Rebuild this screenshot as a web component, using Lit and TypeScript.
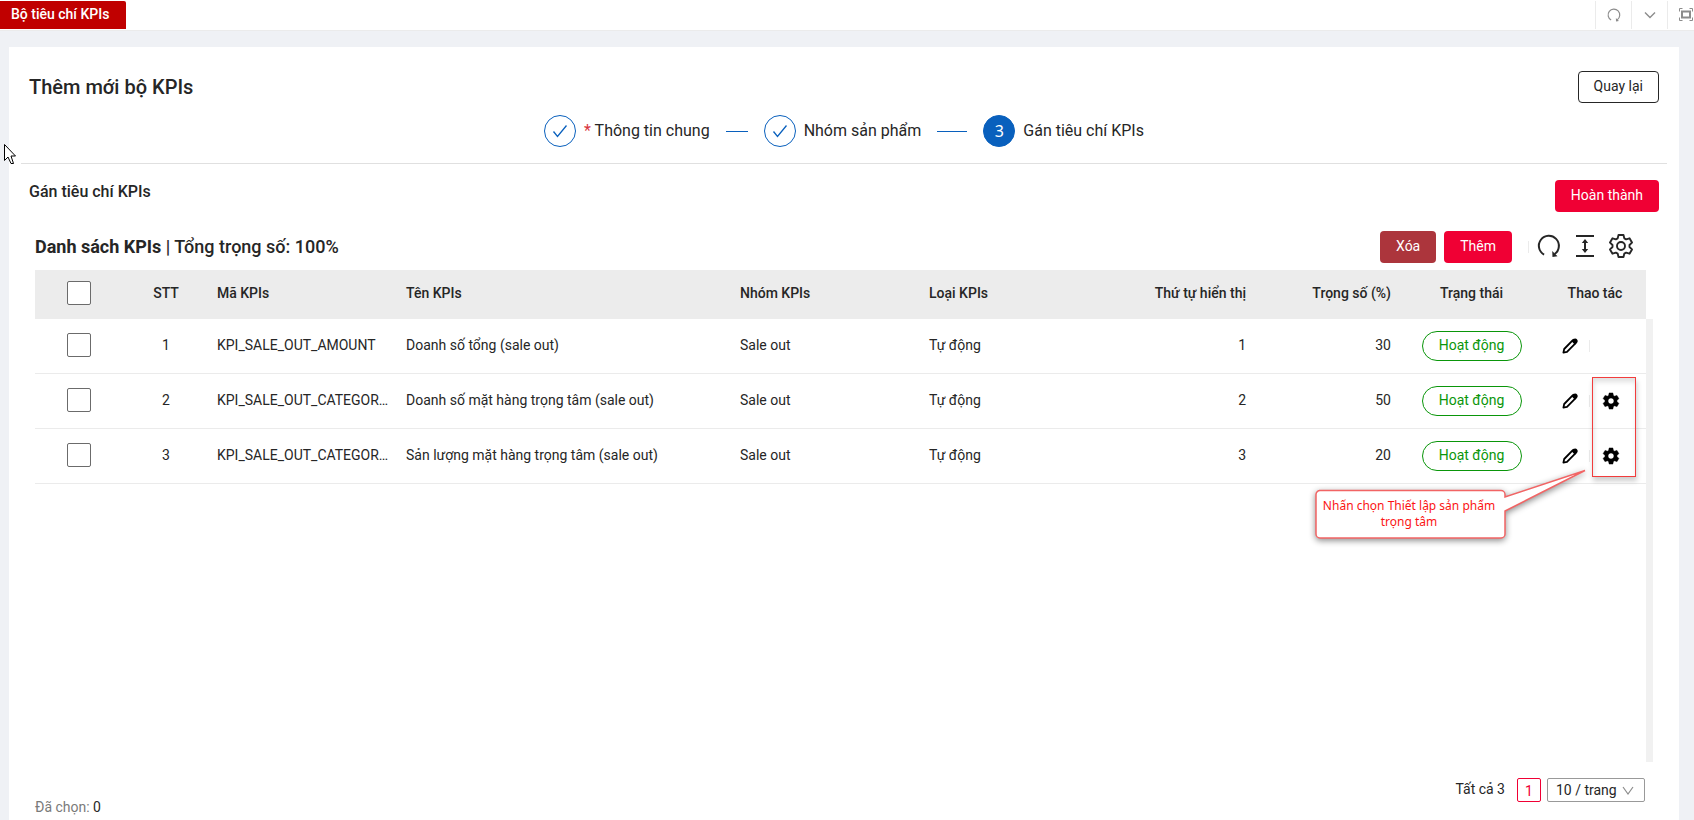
import { LitElement, html, css, svg } from "lit";
import { customElement } from "lit/decorators.js";
import { classMap } from "lit/directives/class-map.js";

interface Kpi {
  code: string;
  name: string;
  group: string;
  kind: string;
  order: number;
  weight: number;
  configurable: boolean;
}

const KPIS: Kpi[] = [
  { code: "KPI_SALE_OUT_AMOUNT", name: "Doanh số tổng (sale out)", group: "Sale out", kind: "Tự động", order: 1, weight: 30, configurable: false },
  { code: "KPI_SALE_OUT_CATEGOR…", name: "Doanh số mặt hàng trọng tâm (sale out)", group: "Sale out", kind: "Tự động", order: 2, weight: 50, configurable: true },
  { code: "KPI_SALE_OUT_CATEGOR…", name: "Sản lượng mặt hàng trọng tâm (sale out)", group: "Sale out", kind: "Tự động", order: 3, weight: 20, configurable: true },
];

const icon = (size: number, body: unknown, box = 24) => html`
  <svg class="icon" width=${size} height=${size} viewBox="0 0 ${box} ${box}" aria-hidden="true">${body}</svg>
`;

const reload = svg`
  <path d="M7.1 20.6A10 10 0 1 1 17.6 20" fill="none" stroke="currentColor" stroke-width="2"/>
  <path d="M15.2 17l.3 6 5-.7z" fill="currentColor"/>`;
const check = svg`<path d="M2.500 9.500l4 5L15.500 3.500" fill="none" stroke="currentColor" stroke-width="1.300"/>`;
const chevron = svg`<path d="M3 5.500l5 5 5-5" fill="none" stroke="currentColor" stroke-width="1.400"/>`;
const fullscreen = svg`
  <path d="M.5 3.500v-3h3M10.500.5h3v3M13.500 9.500v3h-3M3.500 12.500h-3v-3" fill="none" stroke="currentColor"/>
  <path d="M3 3.500h8v6H3z" fill="none" stroke="currentColor" stroke-width="2"/>`;
const density = svg`
  <path d="M3 2h18M3 22h18M12 6.500v11" fill="none" stroke="currentColor" stroke-width="2"/>
  <path d="M8.800 9L12 5l3.200 4zM8.800 15L12 19l3.200-4z" fill="currentColor"/>`;
const gearOutline = svg`
  <path d="M9.500 1h5l.8 3.400 1.800 1 3.400-1.100 2.500 4.300-2.500 2.400v2l2.500 2.400-2.500 4.300-3.400-1.100-1.800 1-.8 3.400h-5l-.8-3.400-1.800-1-3.400 1.100L1 15.400 3.500 13v-2L1 8.600l2.500-4.300 3.400 1.100 1.800-1z" fill="none" stroke="currentColor" stroke-width="1.900" stroke-linejoin="round"/>
  <circle cx="12" cy="12" r="4" fill="none" stroke="currentColor" stroke-width="1.900"/>`;
const pencil = svg`
  <path d="M1.400 14.600l.8-3.600L10.600 2.400a1.900 1.900 0 0 1 2.800 2.900L5 13.800z" fill="none" stroke="currentColor" stroke-width="1.800" stroke-linejoin="round"/>
  <path d="M9.600 3.200L11.800.9q2-1 3.300.5t.2 3.100L12.900 6.700z" fill="currentColor"/>`;
const gearSolid = svg`
  <path fill="currentColor" stroke="currentColor" stroke-width=".6" d="M19.140 12.940c.04-.3.06-.61.06-.94 0-.32-.02-.64-.07-.94l2.030-1.580c.18-.14.23-.41.12-.61l-1.920-3.320c-.12-.22-.37-.29-.59-.22l-2.390.96c-.5-.38-1.030-.7-1.620-.94l-.36-2.540c-.04-.24-.24-.41-.48-.41h-3.840c-.24 0-.43.17-.47.41l-.36 2.540c-.59.24-1.130.57-1.620.94l-2.390-.96c-.22-.08-.47 0-.59.22L2.740 8.870c-.12.21-.08.47.12.61l2.030 1.580c-.05.3-.09.63-.09.94s.02.64.07.94l-2.030 1.580c-.18.14-.23.41-.12.61l1.920 3.320c.12.22.37.29.59.22l2.390-.96c.5.38 1.030.7 1.620.94l.36 2.540c.05.24.24.41.48.41h3.840c.24 0 .44-.17.47-.41l.36-2.540c.59-.24 1.130-.56 1.620-.94l2.390.96c.22.08.47 0 .59-.22l1.920-3.320c.12-.22.07-.47-.12-.61l-2.010-1.580zM12 15.600c-1.980 0-3.600-1.620-3.600-3.600s1.620-3.600 3.600-3.600 3.600 1.620 3.600 3.600-1.620 3.600-3.600 3.600z"/>`;

@customElement("app-root")
export class AppRoot extends LitElement {
  static styles = css`
    :host {
      display: flex;
      flex-direction: column;
      min-height: 100vh;
      box-sizing: border-box;
      background: #eff1f5;
      color: #262626;
      font: 14px/22px Roboto, "Liberation Sans", sans-serif;
    }
    * { box-sizing: border-box; }
    button, input, select { font: inherit; color: inherit; margin: 0; }
    button { cursor: pointer; }
    h1, h2, h3 { margin: 0; font-weight: 500; }
    .icon { display: block; flex: none; overflow: visible; }

    .topbar {
      display: flex;
      height: 31px;
      background: #fff;
      border-bottom: 1px solid #ebebeb;
      overflow: hidden;
      flex: none;
    }
    .tab {
      display: flex;
      align-items: center;
      height: 28px;
      margin-top: 1px;
      padding: 0 17px 2px 11px;
      background: #c00000;
      border-radius: 0 2px 0 0;
      color: #fff;
      font-weight: 500;
      text-decoration: none;
    }
    .tools { display: flex; margin-left: auto; padding: 1px 0; }
    .tool {
      display: flex;
      align-items: center;
      justify-content: center;
      width: 36px;
      padding: 0;
      border: 0;
      border-left: 1px solid #ebebeb;
      background: none;
      color: #8c8c8c;
    }
    .tool.last { width: 27px; justify-content: flex-end; padding-right: 1px; }

    .card {
      position: relative;
      display: flex;
      flex-direction: column;
      flex: 1;
      margin: 16px 15px 0 9px;
      padding: 24px 12px 0;
      background: #fff;
    }
    .head { display: flex; justify-content: space-between; padding: 0 8px; }
    .title { font-size: 20px; line-height: 32px; }
    .btn {
      height: 32px;
      padding: 0 16px 2px;
      border: 0;
      border-radius: 4px;
      background: #f00034;
      color: #fff;
    }
    .btn.outline { border: 1px solid #262626; background: #fff; color: #262626; padding: 0 15px 2px; }
    .btn.muted { background: #ac353c; }

    .steps {
      display: flex;
      justify-content: center;
      align-items: center;
      gap: 16px;
      margin: 12px 0 0;
      padding: 0 0 16px;
      border-bottom: 1px solid #e0e0e0;
      list-style: none;
      font-size: 16px;
      line-height: 32px;
    }
    .step { display: flex; gap: 8px; }
    .dot {
      display: flex;
      align-items: center;
      justify-content: center;
      width: 32px;
      height: 32px;
      border: 1px solid #0960bd;
      border-radius: 50%;
      color: #0960bd;
    }
    .dot.current { background: #0960bd; color: #fff; font-family: "Noto Sans", sans-serif; }
    .required { color: #d9363e; }
    .line { width: 22px; height: 1px; background: #0960bd; }
    .line.long { width: 30px; }

    .section { display: flex; justify-content: space-between; padding: 16px 8px 0; }
    .subtitle { font-size: 16px; line-height: 24px; }

    .list { display: flex; flex-direction: column; flex: 1; padding: 19px 14px 0; }
    .bar { display: flex; align-items: center; gap: 8px; padding: 0 20px 7px 0; }
    .listtitle { margin-right: auto; font-size: 18px; line-height: 32px; }
    .listtitle b { font-weight: 700; }
    .sep { width: 1px; height: 12px; background: #ebebeb; }
    .bar > .sep { margin-left: 8px; }
    .icons { display: flex; align-items: center; gap: 12px; padding-bottom: 2px; }
    .iconbtn { display: flex; padding: 0; border: 0; background: none; color: #262626; }

    .tablewrap { display: flex; flex: none; }
    .scroll { width: 7px; height: 443px; margin-top: 49px; background: #f1f1f1; flex: none; }
    table { flex: 1; width: 100%; table-layout: fixed; border-collapse: separate; border-spacing: 0; align-self: flex-start; }
    th { height: 49px; padding: 0 8px 4px; background: #ececec; font-weight: 500; text-align: left; }
    td { height: 55px; padding: 0 8px 2px; border-bottom: 1px solid #ebebeb; white-space: nowrap; }
    .w-check { width: 88px; }
    .w-index { width: 86px; }
    .w-code { width: 189px; }
    .w-name { width: 334px; }
    .w-mid { width: 189px; }
    .w-num { width: 145px; }
    .w-act { width: 102px; }
    th.center, td.center { text-align: center; }
    th.right, td.right { text-align: right; }
    .check {
      display: block;
      appearance: none;
      width: 24px;
      height: 24px;
      margin: 0 auto;
      border: 1px solid #6b6b6b;
      border-radius: 2px;
      background: #fff;
    }
    .pill {
      display: inline-block;
      width: 100px;
      height: 30px;
      border: 1px solid #0a960a;
      border-radius: 15px;
      color: #0a960a;
      line-height: 26px;
      vertical-align: middle;
    }
    td.flush { padding: 0; }
    .actions { display: flex; align-items: center; gap: 11px; padding-left: 18px; }
    .actions .iconbtn { color: #000; }

    .foot { display: flex; justify-content: space-between; padding: 16px 8px 0 0; }
    .picked { padding-top: 18px; color: #7a7a7a; }
    .picked b { font-weight: 400; color: #262626; }
    .pager { display: flex; align-items: flex-start; gap: 6px; }
    .total { margin-right: 6px; }
    .page { width: 24px; height: 24px; padding: 2px 0 0; border: 1px solid #f00034; border-radius: 2px; background: #fff; color: #f00034; line-height: 20px; }
    .size { position: relative; display: flex; color: #8c8c8c; }
    .size select {
      appearance: none;
      width: 98px;
      height: 24px;
      padding: 0 0 2px 8px;
      border: 1px solid #999;
      border-radius: 2px;
      background: #fff;
      color: #262626;
    }
    .size .icon { position: absolute; right: 10px; top: 6px; pointer-events: none; }

    .frame {
      position: absolute;
      right: 43px;
      top: 330px;
      width: 44px;
      height: 100px;
      border: 1px solid #f23c3c;
      box-shadow: 1px 4px 5px rgba(0, 0, 0, 0.2), inset 1px 4px 5px rgba(0, 0, 0, 0.12);
      pointer-events: none;
    }
    .callout { position: absolute; right: 92px; top: 422px; width: 273px; height: 72px; }
    .callout svg { display: block; overflow: visible; filter: drop-shadow(0 2px 3px rgba(0, 0, 0, 0.45)); }
    .note {
      position: absolute;
      left: 0;
      top: 29px;
      width: 190px;
      margin: 0;
      color: #fb1414;
      font: 12px/16px "Noto Sans", sans-serif;
      text-align: center;
    }
    .pointer { position: absolute; left: -6px; top: 96px; pointer-events: none; }
  `;

  private row(kpi: Kpi, index: number) {
    return html`
      <tr>
        <td class="center"><input class="check" type="checkbox" aria-label="Chọn ${kpi.name}" /></td>
        <td class="center">${index + 1}</td>
        <td>${kpi.code}</td>
        <td>${kpi.name}</td>
        <td>${kpi.group}</td>
        <td>${kpi.kind}</td>
        <td class="right">${kpi.order}</td>
        <td class="right">${kpi.weight}</td>
        <td class="center flush"><span class="pill">Hoạt động</span></td>
        <td class="flush">
          <div class="actions">
            <button class="iconbtn" aria-label="Sửa">${icon(16, pencil, 16)}</button>
            <span class="sep"></span>
            ${kpi.configurable ? html`<button class="iconbtn" aria-label="Thiết lập sản phẩm trọng tâm">${icon(20, gearSolid)}</button>` : ""}
          </div>
        </td>
      </tr>
    `;
  }

  render() {
    return html`
      <nav class="topbar">
        <a class="tab" href="#kpis">Bộ tiêu chí KPIs</a>
        <div class="tools">
          <button class="tool" aria-label="Tải lại">${icon(14, reload)}</button>
          <button class="tool" aria-label="Mở rộng">${icon(16, chevron, 16)}</button>
          <button class="tool last" aria-label="Toàn màn hình">${icon(14, fullscreen, 14)}</button>
        </div>
      </nav>
      <main class="card">
        <header class="head">
          <h1 class="title">Thêm mới bộ KPIs</h1>
          <button class="btn outline">Quay lại</button>
        </header>
        <ol class="steps">
          <li class="step"><span class="dot">${icon(18, check, 18)}</span><span><span class="required">*</span> Thông tin chung</span></li>
          <li class="line" role="presentation"></li>
          <li class="step"><span class="dot">${icon(18, check, 18)}</span><span>Nhóm sản phẩm</span></li>
          <li class=${classMap({ line: true, long: true })} role="presentation"></li>
          <li class="step"><span class="dot current">3</span><span>Gán tiêu chí KPIs</span></li>
        </ol>
        <div class="section">
          <h2 class="subtitle">Gán tiêu chí KPIs</h2>
          <button class="btn">Hoàn thành</button>
        </div>
        <section class="list">
          <div class="bar">
            <h3 class="listtitle"><b>Danh sách KPIs</b> | Tổng trọng số: 100%</h3>
            <button class="btn muted">Xóa</button>
            <button class="btn">Thêm</button>
            <span class="sep"></span>
            <div class="icons">
              <button class="iconbtn" aria-label="Làm mới">${icon(24, reload)}</button>
              <button class="iconbtn" aria-label="Mật độ">${icon(24, density)}</button>
              <button class="iconbtn" aria-label="Cài đặt cột">${icon(24, gearOutline)}</button>
            </div>
          </div>
          <div class="tablewrap">
            <table>
              <thead>
                <tr>
                  <th class="center w-check"><input class="check" type="checkbox" aria-label="Chọn tất cả" /></th>
                  <th class="center w-index">STT</th>
                  <th class="w-code">Mã KPIs</th>
                  <th class="w-name">Tên KPIs</th>
                  <th class="w-mid">Nhóm KPIs</th>
                  <th>Loại KPIs</th>
                  <th class="right w-num">Thứ tự hiển thị</th>
                  <th class="right w-num">Trọng số (%)</th>
                  <th class="center w-num">Trạng thái</th>
                  <th class="center w-act">Thao tác</th>
                </tr>
              </thead>
              <tbody>${KPIS.map((k, i) => this.row(k, i))}</tbody>
            </table>
            <div class="scroll"></div>
          </div>
          <footer class="foot">
            <div class="picked">Đã chọn: <b>0</b></div>
            <div class="pager">
              <span class="total">Tất cả 3</span>
              <button class="page">1</button>
              <label class="size">
                <select aria-label="Số dòng mỗi trang"><option>10 / trang</option></select>
                ${icon(14, svg`<path d="M2 3l5 7 5-7" fill="none" stroke="currentColor" stroke-width="1.200"/>`, 14)}
              </label>
            </div>
          </footer>
        </section>

        <div class="frame"></div>
        <div class="callout">
          <svg width="273" height="72" viewBox="0 0 273 72" aria-hidden="true">
            <path d="M5 21.500H187a4 4 0 0 1 4 4V28L271 1.500 191 42V65a4 4 0 0 1-4 4H6a4 4 0 0 1-4-4V25.500a4 4 0 0 1 4-4z" fill="#fff" stroke="#f26464" stroke-width="1.500"/>
          </svg>
          <p class="note">Nhấn chọn Thiết lập sản phẩm trọng tâm</p>
        </div>
        <svg class="pointer" width="13" height="22" viewBox="0 0 13 22" aria-hidden="true">
          <path d="M1.500 1.500v16l3.500-3.500 3 6.500h2.500L8 13h4.500z" fill="#fff" stroke="#000"/>
        </svg>
      </main>
    `;
  }
}
